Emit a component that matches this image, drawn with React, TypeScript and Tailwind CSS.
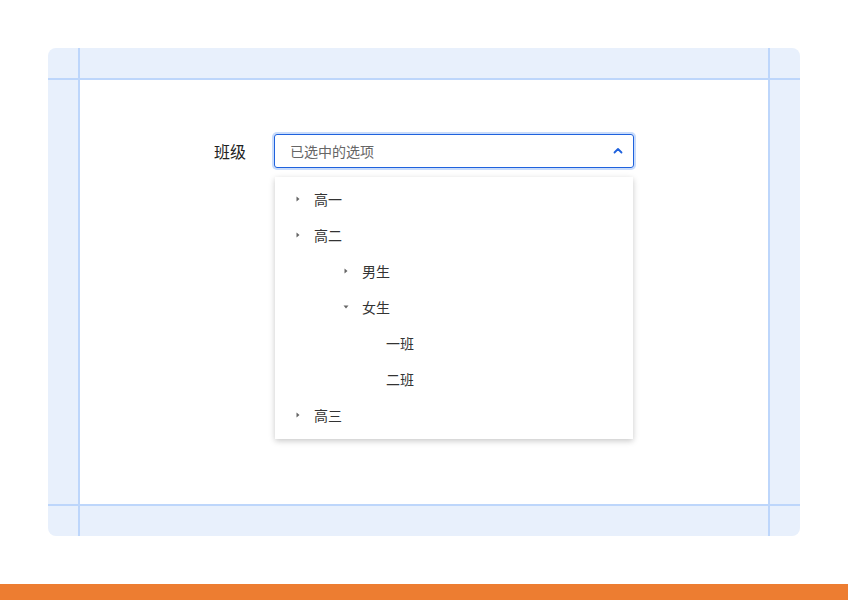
import React from "react";

const font = { fontFamily: '"Noto Sans CJK SC", "Noto Sans", sans-serif' };

function Caret({ open }: { open?: boolean }) {
  return (
    <svg width="8" height="8" viewBox="0 0 8 8" className="shrink-0">
      {open ? (
        <path d="M1.5 2.5 L6.5 2.5 L4 5.5 Z" fill="#666" />
      ) : (
        <path d="M2.5 1.5 L5.5 4 L2.5 6.5 Z" fill="#666" />
      )}
    </svg>
  );
}

type Item = { label: string; pl: string; caret?: "open" | "closed" };

const items: Item[] = [
  { label: "高一", pl: "pl-[19px]", caret: "closed" },
  { label: "高二", pl: "pl-[19px]", caret: "closed" },
  { label: "男生", pl: "pl-[67px]", caret: "closed" },
  { label: "女生", pl: "pl-[67px]", caret: "open" },
  { label: "一班", pl: "pl-[111px]" },
  { label: "二班", pl: "pl-[111px]" },
  { label: "高三", pl: "pl-[19px]", caret: "closed" },
];

export default function App() {
  return (
    <div className="w-[848px] h-[600px] bg-white flex flex-col" style={font}>
      <div className="flex-1 pt-[48px] px-[48px]">
        <div className="relative h-[488px] bg-[#e8f0fc] rounded-[8px] p-[32px]">
          <div className="absolute left-[30px] top-0 bottom-0 w-[2px] bg-[#bdd6fb]" />
          <div className="absolute right-[30px] top-0 bottom-0 w-[2px] bg-[#bdd6fb]" />
          <div className="absolute top-[30px] left-0 right-0 h-[2px] bg-[#bdd6fb]" />
          <div className="absolute bottom-[30px] left-0 right-0 h-[2px] bg-[#bdd6fb]" />
          <div className="relative h-full bg-white pt-[54px] pl-[134px]">
            <div className="flex items-start">
              <div className="w-[60px] h-[34px] flex items-center text-[16px] text-[#222]">班级</div>
              <div className="flex flex-col">
                <div className="w-[360px] h-[34px] rounded-[3px] border border-[#1f62dd] ring-2 ring-[#c9dcfb] flex items-center justify-between pl-[15px] pr-[10px]">
                  <span className="text-[14px] text-[#666]">已选中的选项</span>
                  <svg width="10" height="8" viewBox="0 0 10 8">
                    <path d="M1.5 5.5 L5 2 L8.5 5.5" stroke="#1f62dd" strokeWidth="1.8" fill="none" strokeLinecap="round" strokeLinejoin="round" />
                  </svg>
                </div>
                <div className="mt-[9px] ml-[1px] w-[358px] bg-white pt-[4px] pb-[6px] shadow-[0_2px_6px_rgba(0,0,0,0.22)]">
                  {items.map((it) => (
                    <div key={it.label + it.pl} className={`h-[36px] flex items-center ${it.pl} text-[14px] text-[#333]`}>
                      {it.caret ? (
                        <>
                          <Caret open={it.caret === "open"} />
                          <span className="ml-[12px]">{it.label}</span>
                        </>
                      ) : (
                        <span>{it.label}</span>
                      )}
                    </div>
                  ))}
                </div>
              </div>
            </div>
          </div>
        </div>
      </div>
      <div className="h-[16px] bg-[#ed7d31]" />
    </div>
  );
}
